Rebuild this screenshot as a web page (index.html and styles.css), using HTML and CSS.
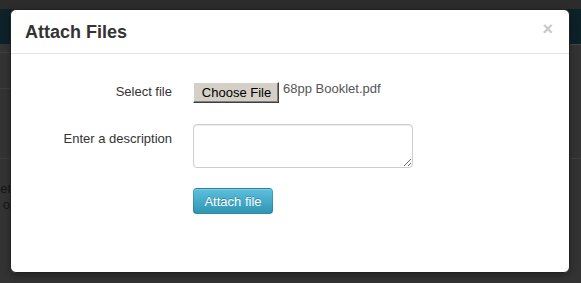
FILE: index.html
```html
<!DOCTYPE html>
<html>
<head>
<meta charset="utf-8">
<link rel="stylesheet" href="styles.css">
</head>
<body>
<div class="page">
  <div class="topstrip"></div>
  <div class="navbar"></div>
  <div class="under">
    <div class="under-left">
      <div class="band b1"></div>
      <div class="band b2"></div>
      <div class="band b3"></div>
      <div class="under-text"><span>et</span><span>o</span></div>
    </div>
    <div class="under-right">
      <div class="band r1"></div>
      <div class="band r2"></div>
    </div>
  </div>
</div>

<div class="modal">
  <div class="modal-header">
    <h3 class="modal-title">Attach Files</h3>
    <span class="close">×</span>
  </div>
  <div class="modal-body">
    <div class="form-grid">
      <label class="lbl lbl-file">Select file</label>
      <div class="ctrl file-ctrl">
        <button class="choose-btn" type="button">Choose File</button>
        <span class="file-name">68pp Booklet.pdf</span>
      </div>
      <label class="lbl lbl-desc">Enter a description</label>
      <div class="ctrl">
        <textarea class="desc"></textarea>
      </div>
      <div></div>
      <div class="ctrl">
        <button class="btn-info" type="button">Attach file</button>
      </div>
    </div>
  </div>
</div>
</body>
</html>
```
FILE: styles.css
```css
html, body {
  margin: 0;
  padding: 0;
}
body {
  width: 581px;
  height: 283px;
  overflow: hidden;
  background: #333333;
  font-family: "Liberation Sans", Arial, sans-serif;
  font-size: 13px;
  color: #333;
  position: relative;
}
.page {
  display: flex;
  flex-direction: column;
  height: 283px;
}
.topstrip {
  height: 9px;
  background: #2c2c2c;
}
.navbar {
  height: 35px;
  background: #0d2129;
}
.under {
  flex: 1;
  display: flex;
}
.under-left {
  width: 11px;
  display: flex;
  flex-direction: column;
  overflow: hidden;
}
.under-right {
  flex: 1;
  display: flex;
  flex-direction: column;
}
.band {
  border-bottom: 1px solid #3e3e3e;
}
.b1 { height: 8px; background: #343434; }
.b2 { height: 35px; background: #333; }
.b3 { height: 69px; background: #333; }
.r1 { height: 0px; border-bottom-color: #454545; }
.r2 { height: 113px; background: #333; }
.under-text {
  margin-top: 22px;
  display: flex;
  flex-direction: column;
  align-items: flex-end;
  gap: 1px;
  font-family: "Liberation Sans", sans-serif;
  font-size: 13px;
  line-height: 15px;
  color: #161616;
}
.under-text span:last-child {
  margin-right: 1px;
}

.modal {
  position: absolute;
  left: 10px;
  top: 9px;
  width: 558px;
  height: 262px;
  background: #fff;
  border: 1px solid #222;
  border-radius: 6px;
  box-shadow: 0 3px 7px rgba(0,0,0,0.3);
  display: flex;
  flex-direction: column;
}
.modal-header {
  display: flex;
  align-items: center;
  justify-content: space-between;
  padding: 10px 15px 8px 14px;
  border-bottom: 1px solid #e5e5e5;
}
.modal-title {
  margin: 0;
  font-size: 18px;
  line-height: 25px;
  font-weight: bold;
  color: #333;
}
.close {
  font-size: 18px;
  font-weight: bold;
  line-height: 18px;
  color: #c8c8c8;
  margin-right: 1px;
  margin-top: -8px;
}
.modal-body {
  padding: 28px 15px 15px 15px;
}
.form-grid {
  display: grid;
  grid-template-columns: 146px auto;
  column-gap: 21px;
  row-gap: 20px;
  align-items: start;
}
.lbl {
  text-align: right;
  line-height: 20px;
  color: #333;
}
.lbl-desc {
  padding-top: 7px;
}
.file-ctrl {
  display: flex;
  align-items: flex-start;
  gap: 4px;
  height: 20px;
}
.choose-btn {
  font-family: "Liberation Sans", Arial, sans-serif;
  font-size: 13px;
  height: 21px;
  width: 86px;
  padding: 0 0 0 1px;
  background: #d4d0c8;
  color: #000;
  border: 1px solid;
  border-color: #fff #404040 #404040 #fff;
  box-shadow: inset -1px -1px 0 #808080;
  border-radius: 0;
  line-height: 18px;
}
.file-name {
  color: #555;
  line-height: 13px;
}
.desc {
  display: block;
  width: 220px;
  height: 44px;
  box-sizing: border-box;
  margin: 2px 0 0 0;
  border: 1px solid #ccc;
  border-radius: 4px;
  box-shadow: inset 0 1px 1px rgba(0,0,0,0.075);
  font-family: "Liberation Sans", Arial, sans-serif;
  font-size: 13px;
  padding: 4px 6px;
}
.btn-info {
  font-family: "Liberation Sans", Arial, sans-serif;
  font-size: 13px;
  width: 80px;
  height: 26px;
  padding: 0;
  color: #fff;
  text-shadow: 0 -1px 0 rgba(0,0,0,0.25);
  background: linear-gradient(to bottom, #5bc0de, #2f96b4);
  border: 1px solid rgba(0,0,0,0.15);
  border-bottom-color: rgba(0,0,0,0.3);
  border-radius: 4px;
  box-shadow: inset 0 1px 0 rgba(255,255,255,0.2), 0 1px 2px rgba(0,0,0,0.05);
}
```
